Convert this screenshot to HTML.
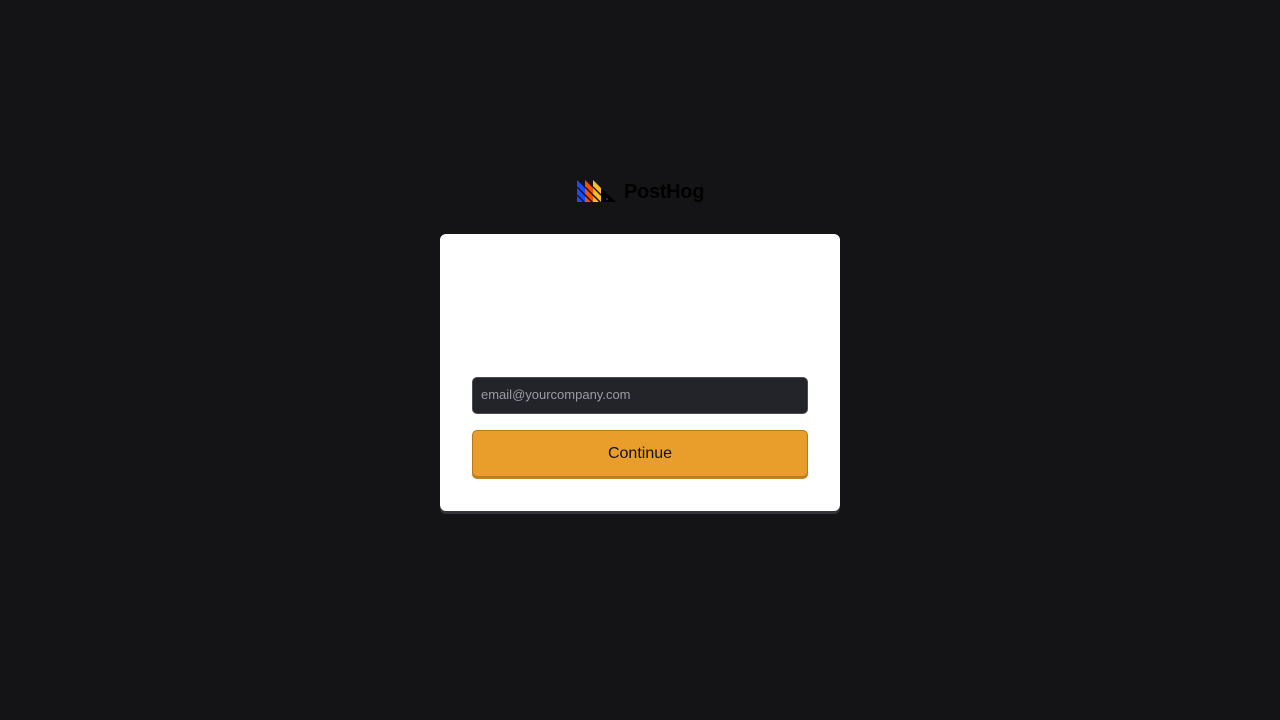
<!DOCTYPE html>
<html><head><style>
body{margin:0;background:#141416;width:1280px;height:720px;font-family:"Liberation Sans",sans-serif;position:relative;overflow:hidden}
.card{position:absolute;left:440px;top:234px;width:400px;height:277px;background:#fff;border-radius:6px;box-shadow:0 3px 0 #35363b}
.inp{position:absolute;left:32px;top:143px;width:326px;height:35px;background:#232429;border:1px solid #4b4c53;border-radius:5px;color:#9a9ca4;font-size:13px;line-height:34px;padding-left:8px}
.btn{position:absolute;left:32px;top:196px;width:334px;height:45px;background:#e99d2a;border:1px solid #b7791c;border-radius:5px;box-shadow:0 2px 0 #c3821f;color:#111;font-size:16px;text-align:center;line-height:45px}
.logo{position:absolute;left:577px;top:180px}
.ph{position:absolute;left:624px;top:181px;font-size:20px;font-weight:bold;color:#000;letter-spacing:-0.3px}
</style></head><body>
<svg class="logo" width="40" height="23" viewBox="0 0 40 23">
<polygon points="0,0 8,8 8,22 0,22" fill="#1d4aff"/>
<polygon points="8,0 16,8 16,22 8,22" fill="#f54e00"/>
<polygon points="16,0 24,8 24,22 16,22" fill="#f9bd2b"/>
<polygon points="24,8 39,22 24,22" fill="#000"/>
<g stroke="#141416" stroke-width="1.3">
<line x1="0" y1="7" x2="24" y2="31"/><line x1="0" y1="15" x2="24" y2="39"/>
<line x1="8" y1="7" x2="24" y2="23"/><line x1="8" y1="15" x2="24" y2="31"/>
<line x1="16" y1="7" x2="24" y2="15"/><line x1="16" y1="15" x2="24" y2="23"/>
</g>
<circle cx="30" cy="19" r="1" fill="#333"/>
</svg>
<div class="ph">PostHog</div>
<div class="card">
<div class="inp">email@yourcompany.com</div>
<div class="btn">Continue</div>
</div>
</body></html>
